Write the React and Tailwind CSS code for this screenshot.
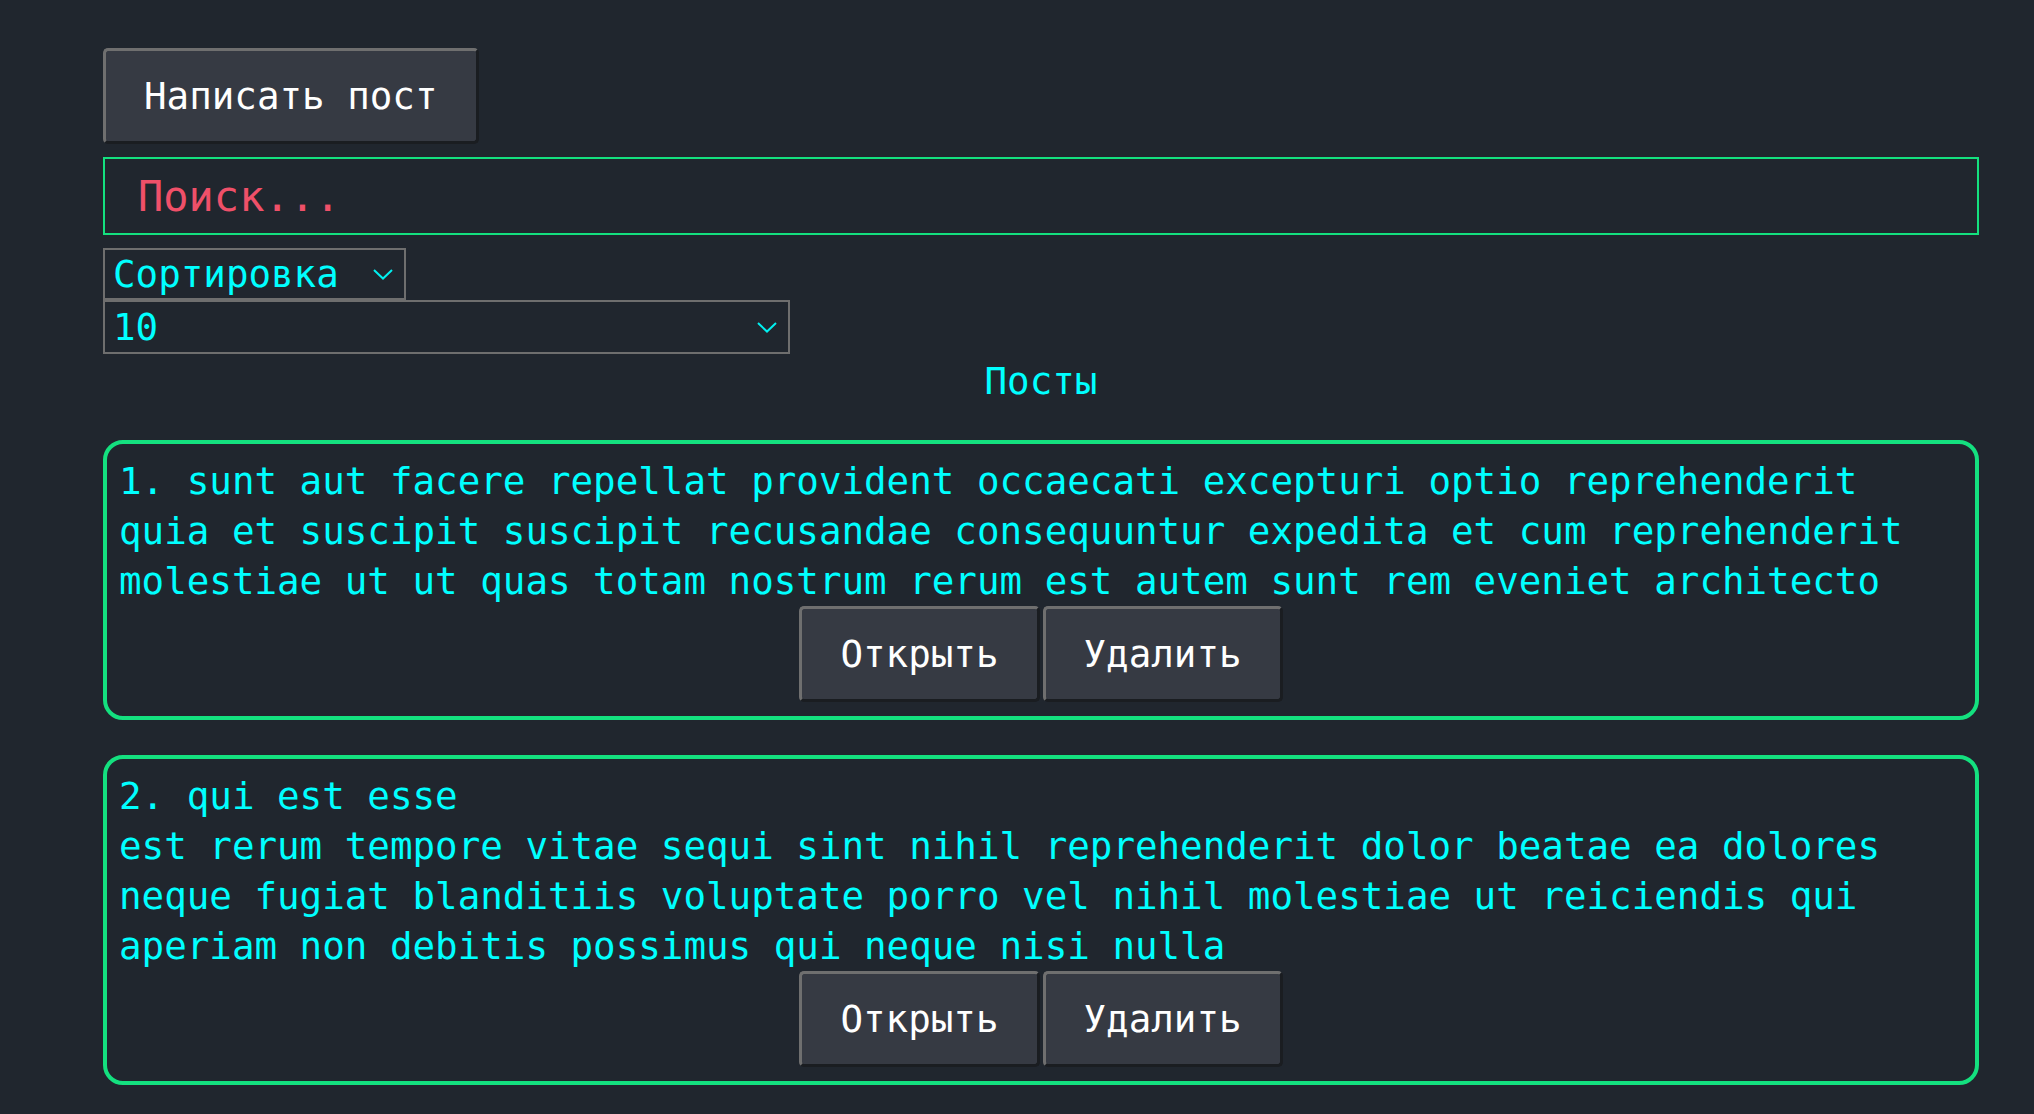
import React from 'react';

const posts = [
  {
    id: 1,
    title: 'sunt aut facere repellat provident occaecati excepturi optio reprehenderit',
    body: 'quia et suscipit suscipit recusandae consequuntur expedita et cum reprehenderit molestiae ut ut quas totam nostrum rerum est autem sunt rem eveniet architecto',
  },
  {
    id: 2,
    title: 'qui est esse',
    body: 'est rerum tempore vitae sequi sint nihil reprehenderit dolor beatae ea dolores neque fugiat blanditiis voluptate porro vel nihil molestiae ut reiciendis qui aperiam non debitis possimus qui neque nisi nulla',
  },
];

const Chevron = () => (
  <svg width="20" height="11" viewBox="0 0 20 11" fill="none">
    <polyline points="1,1 10,9.5 19,1" stroke="#00f0f0" strokeWidth="2" />
  </svg>
);

const Button = ({ children, className = '' }) => (
  <button
    className={`bg-[#363a43] text-white rounded-[5px] border-[3px] border-t-[#6f6f6f] border-l-[#6f6f6f] border-r-[#1a1d21] border-b-[#1a1d21] px-[38px] leading-[50px] ${className}`}
  >
    {children}
  </button>
);

const Select = ({ value, className = '' }) => (
  <div
    className={`flex items-center justify-between border-2 border-[#6e6e6e] pl-[8px] pr-[11px] text-[#00ffff] ${className}`}
  >
    <span>{value}</span>
    <Chevron />
  </div>
);

const PostItem = ({ post, number, className = '' }) => (
  <div className={`rounded-[20px] border-4 border-[#14e07f] px-[12px] pt-[12px] pb-[14px] text-[#00ffff] leading-[50px] ${className}`}>
    <div>{number}. {post.title}</div>
    <div>{post.body}</div>
    <div className="flex justify-center gap-[3px]">
      <Button className="py-[20px]">Открыть</Button>
      <Button className="py-[20px]">Удалить</Button>
    </div>
  </div>
);

export default function App() {
  return (
    <div
      className="min-h-screen bg-[#20262e] pl-[103px] pt-[48px] text-[37.5px]"
      style={{ fontFamily: '"DejaVu Sans Mono", monospace' }}
    >
      <div className="w-[1876px]">
        <Button className="py-[20px]">Написать пост</Button>

        <input
          className="mt-[13px] block w-full h-[78px] border-2 border-[#14e07f] bg-transparent pl-[33px] text-[42px] text-[#00ffff] outline-none placeholder:text-[#ef5069]"
          placeholder="Поиск..."
        />

        <Select value="Сортировка" className="mt-[13px] w-[303px] leading-[48px]" />
        <Select value="10" className="w-[687px] leading-[50px]" />

        <h1 className="mt-[2px] text-center text-[#00ffff] leading-[50px]">Посты</h1>

        {posts.map((post, i) => (
          <PostItem
            key={post.id}
            post={post}
            number={i + 1}
            className={i === 0 ? 'mt-[34px]' : 'mt-[35px]'}
          />
        ))}
      </div>
    </div>
  );
}
